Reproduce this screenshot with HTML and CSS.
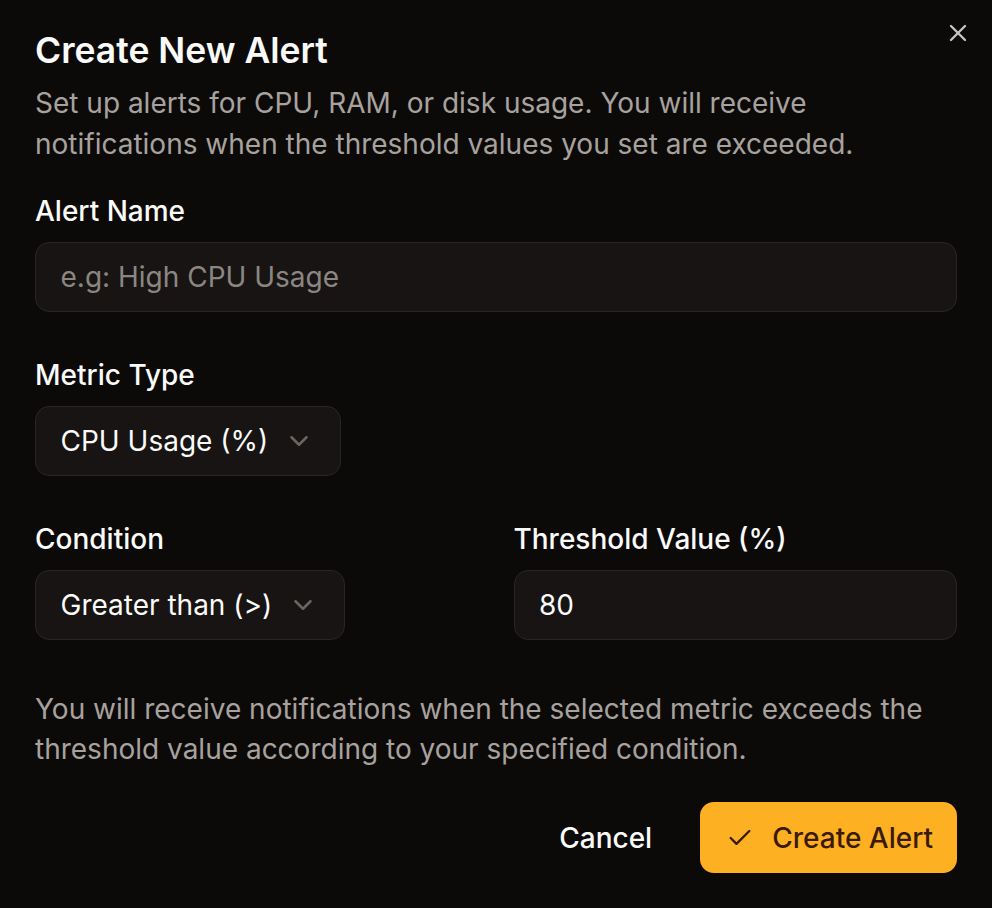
FILE: index.html
```html
<!DOCTYPE html>
<html lang="en">
<head>
<meta charset="utf-8">
<title>Create New Alert</title>
<link rel="stylesheet" href="styles.css">
</head>
<body>
<div class="dialog">
  <button class="close" aria-label="Close">
    <svg viewBox="0 0 24 24" width="28" height="28" fill="none" stroke="currentColor" stroke-width="2" stroke-linecap="round" stroke-linejoin="round"><path d="M18 6 6 18"/><path d="m6 6 12 12"/></svg>
  </button>
  <header class="head">
    <h2 class="title">Create New Alert</h2>
    <p class="desc">Set up alerts for CPU, RAM, or disk usage. You will receive notifications when the threshold values you set are exceeded.</p>
  </header>
  <div class="form">
    <div class="field">
      <label class="label">Alert Name</label>
      <div class="input placeholder">e.g: High CPU Usage</div>
    </div>
    <div class="field">
      <label class="label">Metric Type</label>
      <div class="select">
        <span>CPU Usage (%)</span>
        <svg class="chev" viewBox="0 0 24 24" width="30" height="30" fill="none" stroke="currentColor" stroke-width="2" stroke-linecap="round" stroke-linejoin="round"><path d="m6 9 6 6 6-6"/></svg>
      </div>
    </div>
    <div class="row">
      <div class="field">
        <label class="label">Condition</label>
        <div class="select">
          <span>Greater than (&gt;)</span>
          <svg class="chev" viewBox="0 0 24 24" width="30" height="30" fill="none" stroke="currentColor" stroke-width="2" stroke-linecap="round" stroke-linejoin="round"><path d="m6 9 6 6 6-6"/></svg>
        </div>
      </div>
      <div class="field">
        <label class="label">Threshold Value (%)</label>
        <div class="input">80</div>
      </div>
    </div>
    <p class="note">You will receive notifications when the selected metric exceeds the threshold value according to your specified condition.</p>
  </div>
  <footer class="actions">
    <button class="btn ghost">Cancel</button>
    <button class="btn primary">
      <svg viewBox="0 0 24 24" width="28" height="28" fill="none" stroke="currentColor" stroke-width="2" stroke-linecap="round" stroke-linejoin="round"><path d="M20 6 9 17l-5-5"/></svg>
      <span>Create Alert</span>
    </button>
  </footer>
</div>
</body>
</html>
```
FILE: styles.css
```css
* { box-sizing: border-box; }
html, body { margin: 0; padding: 0; background: #0c0a09; }
body {
  font-family: Inter, "Noto Sans", "Liberation Sans", sans-serif;
  color: #fafaf9;
  width: 992px;
  height: 908px;
}
.dialog {
  position: relative;
  padding: 35px;
  display: flex;
  flex-direction: column;
}
.close {
  position: absolute;
  top: 19px;
  right: 20px;
  background: none;
  border: 0;
  padding: 0;
  color: #c9c5c1;
  display: flex;
}
.head { display: flex; flex-direction: column; gap: 16px; }
.title {
  margin: 0;
  font-size: 35.5px;
  line-height: 32px;
  font-weight: 600;
}
.desc {
  margin: 0;
  font-size: 28px;
  line-height: 41px;
  color: #a8a29e;
}
.form {
  display: flex;
  flex-direction: column;
  gap: 46px;
  margin-top: 29px;
}
.field { display: flex; flex-direction: column; gap: 13px; }
.label {
  font-size: 28px;
  line-height: 35px;
  font-weight: 500;
}
.input, .select {
  height: 70px;
  border: 1.75px solid #292524;
  background: #171413;
  border-radius: 14px;
  padding: 0 24.5px;
  font-size: 28px;
  display: flex;
  align-items: center;
  white-space: nowrap;
}
.placeholder { color: #8c8682; }
.select {
  align-self: flex-start;
  gap: 16px;
  padding-right: 26px;
}
.chev { color: #6b6560; flex: none; }
.row {
  display: grid;
  grid-template-columns: 1fr 1fr;
  gap: 35px;
}
.note {
  margin: 3px 0 0;
  font-size: 28px;
  line-height: 40px;
  color: #a8a29e;
}
.actions {
  display: flex;
  justify-content: flex-end;
  gap: 14px;
  margin-top: 33px;
}
.btn {
  height: 71px;
  border: 0;
  border-radius: 14px;
  font-family: inherit;
  font-size: 28px;
  font-weight: 500;
  display: flex;
  align-items: center;
  white-space: nowrap;
}
.ghost { background: transparent; color: #fafaf9; padding: 0 34px; }
.primary { background: #fdb022; color: #3b1a05; padding: 0 24px 0 26px; gap: 18px; }
```
